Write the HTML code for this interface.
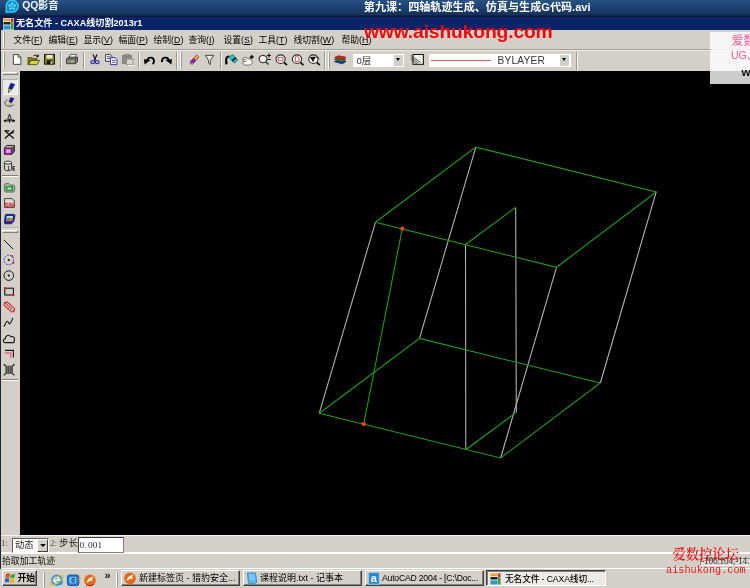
<!DOCTYPE html>
<html lang="zh">
<head>
<meta charset="utf-8">
<title>无名文件 - CAXA线切割2013r1</title>
<style>
*{box-sizing:border-box;margin:0;padding:0}
html,body{width:750px;height:588px;overflow:hidden;background:#d4d0c8}
body{position:relative;will-change:transform;font-family:"Liberation Sans","Noto Sans CJK SC",sans-serif;font-size:9px;color:#000}
.abs{position:absolute}
.t{position:absolute;white-space:nowrap;line-height:1}
#qq{left:0;top:0;width:750px;height:17px;background:linear-gradient(#27527f 0,#21497a 25%,#1a3d68 55%,#15325a 85%,#0c1c38 94%,#0a1830 100%)}
#qq .name{left:22.3px;top:1px;font-size:10.3px;color:#eef4fa;font-weight:700;letter-spacing:-0.15px}
#qq .ttl{left:363.8px;top:2px;font-size:11.1px;color:#fff;font-weight:700}
#cx{left:0;top:16.5px;width:750px;height:13.5px;background:#0a246a}
#cx .ttl{left:16px;top:2.5px;font-size:9.1px;color:#fff;font-weight:700}
#menu{left:0;top:30px;width:750px;height:19px;background:#d4d0c8}
#menu .t{top:5.8px;font-size:8.8px}
#tb{left:0;top:49px;width:750px;height:22px;background:#d4d0c8}
#canvas{left:20.4px;top:70.7px;width:729.6px;height:464.2px;background:#000;overflow:hidden}
#left{left:0;top:71px;width:20px;height:464px;background:#d4d0c8}
#inbar{left:0;top:535px;width:750px;height:19px;background:#d4d0c8;border-top:1px solid #f4f2ee}
#status{left:0;top:554px;width:750px;height:14px;background:#d4d0c8}
#task{left:0;top:567.7px;width:750px;height:20.3px;background:#d4d0c8;border-top:1.3px solid #fff}
.grip{position:absolute;width:2px;border-left:1px solid #fbfbf8;border-right:1px solid #9c9a94}
.sep{position:absolute;width:2px;border-left:1px solid #9c9a94;border-right:1px solid #f4f2ee}
.btn{position:absolute;height:16.5px;top:1px;border:1px solid;border-color:#fff #404040 #404040 #fff;box-shadow:inset -1px -1px 0 #808080;background:#d4d0c8}
.btn .t{font-size:9px;top:3px}

.combo{position:absolute;background:#fff}
.dd{position:absolute;top:1px;width:9px;height:11px;background:#d2d0ca}
.dd:after{content:"";position:absolute;left:1.7px;top:3.5px;border:2.8px solid transparent;border-top:3.2px solid #000;border-bottom:0}

.btn.on{background:#ecebe6;border-color:#404040 #fff #fff #404040;box-shadow:inset 1px 1px 0 #808080}
</style>
</head>
<body>

<!-- QQ player title -->
<div id="qq" class="abs">
  <svg class="abs" style="left:5px;top:0" width="14" height="14" viewBox="0 0 14 14">
    <path d="M1.2 12.4 L1.2 6 A6 6 0 1 1 7.2 12.2 L3.4 12.2 Z" fill="#0c8ccc" stroke="#3cd4ff" stroke-width="1.3" stroke-linejoin="round"/>
    <circle cx="7.2" cy="3.5" r="1.25" fill="#5ce0ff"/><circle cx="4.6" cy="5.4" r="1.25" fill="#5ce0ff"/>
    <circle cx="9.8" cy="5.4" r="1.25" fill="#5ce0ff"/><circle cx="5.6" cy="8.5" r="1.25" fill="#5ce0ff"/>
    <circle cx="8.8" cy="8.5" r="1.25" fill="#5ce0ff"/><circle cx="7.2" cy="6.1" r="0.8" fill="#a0f0ff"/>
  </svg>
  <span class="t name">QQ影音</span>
  <span class="t ttl">第九课：四轴轨迹生成、仿真与生成G代码.avi</span>
</div>

<!-- CAXA title bar -->
<div id="cx" class="abs">
  <svg class="abs" style="left:3px;top:1px" width="11" height="12" viewBox="0 0 11 12">
    <rect x="0" y="0" width="11" height="12" fill="#e8e4d8"/>
    <rect x="0.5" y="0.5" width="7" height="2.5" fill="#f0a030"/>
    <rect x="8" y="0.5" width="2.5" height="4" fill="#d03020"/>
    <rect x="0.5" y="4" width="7" height="2.5" fill="#202020"/>
    <rect x="0.5" y="7.5" width="7" height="4" fill="#2898c8"/>
    <rect x="8" y="5" width="2.5" height="6.5" fill="#30a050"/>
  </svg>
  <span class="t ttl">无名文件 - CAXA线切割2013r1</span>
</div>

<!-- menu -->
<div id="menu" class="abs">
  <div class="grip" style="left:3px;top:2px;height:15px"></div>
  <span class="t" style="left:13.5px">文件(<u>F</u>)</span>
  <span class="t" style="left:48.5px">编辑(<u>E</u>)</span>
  <span class="t" style="left:83.5px">显示(<u>V</u>)</span>
  <span class="t" style="left:118.5px">幅面(<u>P</u>)</span>
  <span class="t" style="left:153.5px">绘制(<u>D</u>)</span>
  <span class="t" style="left:188.5px">查询(<u>I</u>)</span>
  <span class="t" style="left:223.5px">设置(<u>S</u>)</span>
  <span class="t" style="left:258.5px">工具(<u>T</u>)</span>
  <span class="t" style="left:293.5px">线切割(<u>W</u>)</span>
  <span class="t" style="left:341.5px">帮助(<u>H</u>)</span>
</div>

<!-- toolbar -->
<div id="tb" class="abs">

  <div class="grip" style="left:3px;top:3px;height:17px"></div>
  <svg class="abs" style="left:0;top:0" width="750" height="22" viewBox="0 49 750 22" shape-rendering="auto">
    <g transform="translate(0 54.4) scale(1 0.93) translate(0 -54.5)">
    <!-- new -->
    <path d="M13.4 54.6 H18 L20.9 57.5 V65.2 H13.4 Z" fill="#fff" stroke="#303030" stroke-width="0.9"/>
    <path d="M18 54.6 V57.5 H20.9" fill="none" stroke="#303030" stroke-width="0.8"/>
    <!-- open -->
    <path d="M28 58 H32 L33 59 H37 V61 H30.5 L28 65.5 Z" fill="#8a8a18" stroke="#3a3a00" stroke-width="0.8"/>
    <path d="M28.5 65.5 L31 61 H39.5 L37 65.5 Z" fill="#d8d838" stroke="#3a3a00" stroke-width="0.8"/>
    <path d="M33.5 56 Q36 54 38 56.5 M38.3 54.5 V57 H36" fill="none" stroke="#000" stroke-width="0.9"/>
    <!-- save -->
    <rect x="44.5" y="54.5" width="10" height="10.5" fill="#7c7c14" stroke="#1c1c00" stroke-width="1"/>
    <rect x="46.5" y="55" width="6" height="4" fill="#e4e4dc"/>
    <rect x="47" y="61" width="5" height="4" fill="#101010"/>
    <rect x="50.5" y="62" width="1.5" height="2.5" fill="#e4e4dc"/>
    <!-- print -->
    <path d="M69 58 L70.5 54.5 H76.5 L75 58 Z" fill="#f0f0ec" stroke="#404040" stroke-width="0.8"/>
    <path d="M66.5 59.5 L68.5 57.5 H77.5 V62.5 L75.5 64.5 H66.5 Z" fill="#8c8c88" stroke="#303030" stroke-width="0.9"/>
    <path d="M66.5 59.5 H75.5 V64.5 M75.5 59.5 L77.5 57.5" fill="none" stroke="#303030" stroke-width="0.8"/>
    <rect x="71" y="61" width="2.5" height="1.6" fill="#c8c83c"/>
    <!-- cut -->
    <path d="M93 54.5 L95.6 61 M97 54.5 L94.4 61" stroke="#101018" stroke-width="1.2" fill="none"/>
    <circle cx="92.7" cy="62.8" r="1.8" fill="none" stroke="#2828c0" stroke-width="1.2"/>
    <circle cx="97.2" cy="62.8" r="1.8" fill="none" stroke="#2828c0" stroke-width="1.2"/>
    <!-- copy -->
    <path d="M105.5 54.5 H110 L112 56.5 V62 H105.5 Z" fill="#e8e8f0" stroke="#303040" stroke-width="0.9"/>
    <path d="M107 57 H110.5 M107 59 H110.5" stroke="#303040" stroke-width="0.8"/>
    <path d="M110.5 58 H115 L117 60 V65.5 H110.5 Z" fill="#f4f4ff" stroke="#3030b0" stroke-width="1"/>
    <path d="M112 61 H115.5 M112 63 H115.5" stroke="#3030b0" stroke-width="0.8"/>
    <!-- paste (disabled) -->
    <rect x="122.5" y="55.5" width="9" height="9" fill="#8c8c88" stroke="#7c7c78" stroke-width="0.8"/>
    <rect x="125" y="54.3" width="4" height="2.2" fill="#9c9c98" stroke="#70706c" stroke-width="0.6"/>
    <rect x="126.5" y="59.5" width="6.5" height="6" fill="#d8d6d0" stroke="#8c8c88" stroke-width="0.9"/>
    <path d="M128 66.3 H134" stroke="#f8f8f4" stroke-width="1"/>
    <!-- undo -->
    <path d="M147.2 61.2 C147.6 57 153.6 56.6 154 61.4 C154.2 63.2 153.4 64.2 152.6 65" fill="none" stroke="#000" stroke-width="1.9"/>
    <path d="M144 59.6 L150.6 60.6 L144.6 65.4 Z" fill="#000"/>
    <!-- redo -->
    <path d="M168.8 61.2 C168.4 57 162.4 56.6 162 61.4 C161.9 62 162 62.4 162.2 62.8" fill="none" stroke="#000" stroke-width="1.9"/>
    <path d="M172 59.6 L165.4 60.6 L171.4 65.4 Z" fill="#000"/>
    <!-- eraser/brush -->
    <path d="M190 62.5 L196.8 55.2 L199 57.2 L192.6 65 Q190.4 65.6 190 62.5 Z" fill="#9020a0" stroke="#401048" stroke-width="0.6"/>
    <path d="M194 58.4 L197 55.4 L198.8 57.2 L196 60.4 Z" fill="#e8c830"/>
    <path d="M195.6 56.8 L197.6 58.8" stroke="#d03020" stroke-width="0.9"/>
    <path d="M190.6 63 L192.8 64.6" stroke="#e8d0f0" stroke-width="0.8"/>
    <!-- funnel -->
    <path d="M205.3 55.5 H213.7 L210.4 61 V65.5 L208.6 64 V61 Z" fill="#eceae4" stroke="#303030" stroke-width="0.9"/>
    <!-- refresh -->
    <path d="M229.4 55.6 C225 55.4 225 59 225.2 65.4 L227.6 65 C227.2 60.6 226.8 58 229.6 57.4 Z" fill="#080808"/>
    <path d="M229.0 57.8 L232.6 54.6 L237.8 60.6 L234.2 63.8 Z" fill="#14ccd4" stroke="#003c40" stroke-width="0.6"/>
    <path d="M231.5 60.7 L235.1 57.5 L236.4 59.0 L232.8 62.2 Z" fill="#041416"/>
    <!-- pan -->
    <path d="M249.4 57.6 L251.6 55 L254 57 L251.8 59.6 Z" fill="#181818"/>
    <path d="M243 59 Q245 56.6 247.4 58.6 L250.6 60 L252.8 63.4 L250 66 H244.6 L242.4 63.6 L244 62 L242.6 60.6 Z" fill="#f8f8f4" stroke="#505050" stroke-width="0.8"/>
    <path d="M243.2 60.4 H246.4 M243.2 62.2 H246" stroke="#404040" stroke-width="0.7"/>
    <!-- zoom + -->
    <circle cx="263" cy="59.5" r="3.9" fill="#f4f4f0" stroke="#282828" stroke-width="1.1"/>
    <path d="M265.8 62.4 L268.6 65.4" stroke="#1c5c4c" stroke-width="1.8"/>
    <path d="M267 55.68 H271 M269 53.6 V57.8 M267.4 59.98 H270.6" stroke="#000" stroke-width="1.05"/>
    <!-- zoom window -->
    <circle cx="280.6" cy="59.6" r="4.6" fill="#f4f4f0" stroke="#282828" stroke-width="1.1"/>
    <rect x="278.2" y="57.6" width="4.8" height="3.8" fill="none" stroke="#c84040" stroke-width="0.8"/>
    <path d="M284 63 L287 66" stroke="#101010" stroke-width="1.8"/>
    <!-- zoom page -->
    <circle cx="297" cy="59.6" r="4.6" fill="#f4f4f0" stroke="#282828" stroke-width="1.1"/>
    <path d="M295.4 57 H297.6 L299 58.4 V62.2 H295.4 Z" fill="#fff" stroke="#c83030" stroke-width="0.8"/>
    <path d="M300.4 63 L303.4 66" stroke="#101010" stroke-width="1.8"/>
    <!-- zoom prev -->
    <circle cx="313.4" cy="59.6" r="4.6" fill="#f4f4f0" stroke="#282828" stroke-width="1.1"/>
    <path d="M310 57.4 L315.6 57 L313 62.6 Z" fill="#000"/>
    <path d="M315.4 57.4 Q318.4 56.6 319 59.6" fill="none" stroke="#282828" stroke-width="0.9"/>
    <path d="M316.8 63 L319.8 66" stroke="#101010" stroke-width="1.8"/>
    <!-- layers -->
    <path d="M334.4 62.4 L338.4 60.4 L346 62 L342.4 64.6 Z" fill="#2030c8" stroke="#0c1460" stroke-width="0.7"/>
    <path d="M334.4 60.2 L338.4 58.2 L346 59.8 L342.4 62.4 Z" fill="#20a030" stroke="#0c4814" stroke-width="0.7"/>
    <path d="M334.4 58 L338.4 56 L346 57.6 L342.4 60.2 Z" fill="#e02020" stroke="#700c0c" stroke-width="0.7"/>
    <!-- linetype icon -->
    <rect x="413" y="54.6" width="10.4" height="10.6" fill="#f0eee8" stroke="#181818" stroke-width="1.1"/>
    <path d="M410.8 55.6 L420.4 63 M410.8 57.8 L418.6 63.8 M410.8 60 L417 64.8" stroke="#282828" stroke-width="0.8"/>
    </g>
  </svg>
  <div class="sep" style="left:60px;top:3px;height:17px"></div>
  <div class="sep" style="left:83px;top:3px;height:17px"></div>
  <div class="sep" style="left:138px;top:3px;height:17px"></div>
  <div class="sep" style="left:176px;top:1px;height:20px"></div>
  <div class="grip" style="left:180px;top:3px;height:17px"></div>
  <div class="sep" style="left:220px;top:3px;height:17px"></div>
  <div class="sep" style="left:324px;top:1px;height:20px"></div>
  <div class="grip" style="left:328px;top:3px;height:17px"></div>
  <div class="combo" style="left:353px;top:4.5px;width:51px;height:13px">
    <span class="t" style="left:3.5px;top:2.5px;font-size:9.5px;color:#303030">0层</span>
    <div class="dd" style="right:1px"></div>
  </div>
  <div class="combo" style="left:429px;top:4.5px;width:142px;height:13px">
    <div class="abs" style="left:1.5px;top:6px;width:60px;height:1px;background:#dc6464"></div>
    <span class="t" style="left:68.5px;top:2.3px;font-size:10.2px;letter-spacing:0.2px;color:#343434">BYLAYER</span>
    <div class="dd" style="right:2px"></div>
  </div>
  <div class="sep" style="left:576px;top:1px;height:20px"></div>
</div>

<div class="abs" style="left:1px;top:48.5px;width:749px;height:1px;background:#a4a098"></div>
<div class="abs" style="left:1px;top:49.5px;width:749px;height:1px;background:#eeece8"></div>
<!-- left toolbar -->
<div id="left" class="abs">
  <div class="abs" style="left:2px;top:1px;width:16px;height:3px;border-top:1px solid #fff;border-left:1px solid #fff;border-bottom:1px solid #808080;border-right:1px solid #808080"></div>
  <div class="abs" style="left:2.4px;top:8.3px;width:15.4px;height:15.4px;background:#eceae6;border:1px solid;border-color:#aeaca6 #f8f8f6 #f8f8f6 #b8b6b0"></div>
  <div class="abs" style="left:2px;top:104px;width:16px;height:2px;border-top:1px solid #808080;border-bottom:1px solid #fff"></div>
  <div class="abs" style="left:2px;top:156px;width:16px;height:2px;border-top:1px solid #b4b2ac;border-bottom:1px solid #e4e2de"></div>
  <div class="abs" style="left:2px;top:159px;width:16px;height:3px;border-top:1px solid #fff;border-left:1px solid #fff;border-bottom:1px solid #808080;border-right:1px solid #808080"></div>
  <div class="abs" style="left:2px;top:308px;width:16px;height:2px;border-top:1px solid #808080;border-bottom:1px solid #fff"></div>
  <svg class="abs" style="left:0;top:0" width="20" height="464" viewBox="0 71 20 464">
    <!-- pencil 1 -->
    <path d="M10.8 83.2 L14.8 84.4 L11.8 89.6 L8.6 88.4 Z" fill="#1418b8" stroke="#080c60" stroke-width="0.5"/>
    <path d="M8.6 88.4 L11.8 89.6 L8.5 92.6 Z" fill="#d0d428" stroke="#303010" stroke-width="0.5"/><path d="M8.55 91 L9.6 91.5 L8.5 92.6 Z" fill="#181808"/>
    <!-- pencil 2 with arc -->
    <path d="M10.6 97.6 L14 98.6 L11.6 102.8 L9 102 Z" fill="#1020a8" stroke="#080c50" stroke-width="0.5"/>
    <path d="M9 102 L11.6 102.8 L9 105" fill="#e8d838" stroke="#404010" stroke-width="0.4"/>
    <path d="M7.4 100 C3.4 101.4 4.4 106.4 9.4 106.2 C11.6 106.2 13.4 105.4 14 104.4" fill="none" stroke="#303030" stroke-width="0.9"/>
    <!-- dimension -->
    <path d="M9.5 114 L7.6 119.4 H11.4 Z" fill="none" stroke="#101010" stroke-width="0.9"/>
    <path d="M4 120.8 H15" stroke="#101010" stroke-width="1"/>
    <path d="M3.4 120.8 L6.2 119 V122.6 Z M15.4 120.8 L12.6 119 V122.6 Z" fill="#101010"/>
    <path d="M9.5 119.4 V123" stroke="#101010" stroke-width="0.8"/>
    <!-- trim -->
    <path d="M4.4 130.8 H9.6" stroke="#101010" stroke-width="1.3"/>
    <path d="M4.8 138.6 L14 130.2 M5.2 131 L13.8 138.6" stroke="#101010" stroke-width="1.3"/>
    <path d="M10.4 133.6 L14.2 132.6" stroke="#101010" stroke-width="0.9"/>
    <!-- magenta box -->
    <path d="M4.4 148 L6.8 145.4 H14.4 V151.6 L12 154.2 H4.4 Z" fill="#585858" stroke="#202020" stroke-width="0.9"/>
    <path d="M5.4 147.6 L7.2 146 H13.6 L12 147.6 Z" fill="#b8b4ac"/>
    <rect x="4.8" y="148.2" width="7" height="5.8" fill="#dc38dc" stroke="#401040" stroke-width="0.7"/>
    <rect x="6.6" y="149.6" width="3.6" height="3" fill="#ffd0ff"/>
    <path d="M8.4 149.4 V153" stroke="#e060e0" stroke-width="0.8"/>
    <!-- cylinder -->
    <ellipse cx="8" cy="162.6" rx="3.6" ry="1.5" fill="#f0eee8" stroke="#202020" stroke-width="0.9"/>
    <path d="M4.4 162.6 V169 C4.4 171.2 11.6 171.2 11.6 169 V162.6" fill="none" stroke="#202020" stroke-width="0.9"/>
    <path d="M8.6 166 V170" stroke="#202020" stroke-width="0.8"/>
    <path d="M13 166.4 V170.4 M13 166.6 H15 M13 168.4 H14.6 M13 170.2 H15" stroke="#101010" stroke-width="0.9"/>
    <!-- green folder -->
    <path d="M4.4 185.4 Q4.4 183.6 6 183.6 H9 L10.4 185 H13 Q14.6 185 14.6 186.6 V190.4 Q14.6 192 13 192 H6 Q4.4 192 4.4 190.4 Z" fill="#a4b8a4" stroke="#586858" stroke-width="0.9"/>
    <rect x="6" y="186.4" width="6.8" height="4.2" fill="#38b048" stroke="#287028" stroke-width="0.5"/>
    <rect x="7.6" y="187.6" width="3.4" height="1.8" fill="#c8f0c8"/>
    <!-- red sav doc -->
    <path d="M4.6 198.6 H12.2 L14.4 200.8 V207.4 H4.6 Z" fill="#c4c0b8" stroke="#383838" stroke-width="0.9"/>
    <path d="M5.2 200 H11.8 M5.2 201.4 H13" stroke="#f0f0ec" stroke-width="0.8"/>
    <text x="4.6" y="207" font-family="Liberation Sans,sans-serif" font-size="5.6" font-weight="700" fill="#ff1010" letter-spacing="-0.3">SAV</text>
    <!-- blue picture -->
    <path d="M6.2 214.4 H13.6 Q15 214.4 14.8 215.8 L13.8 221.4 L11.4 223.8 H5.6 Q4.2 223.8 4.4 222.4 L5.2 215.6 Q5.4 214.4 6.2 214.4 Z" fill="#1c24b8" stroke="#0c1070" stroke-width="0.8"/>
    <path d="M6.8 216 H13 L12.4 220.6 H6.2 Z" fill="#c8e4f8"/>
    <path d="M6.5 218.6 L9 217.6 L10.6 218.6 L12.7 217.8 L12.4 220.6 H6.2 Z" fill="#38a048"/>
    <path d="M6.3 220 L9 219.2 L12.5 219.6 L12.4 221.2 H6.1 Z" fill="#e06820"/>
    <!-- line -->
    <path d="M4 240 L13.2 249.2" stroke="#181818" stroke-width="1"/>
    <!-- dotted circle -->
    <circle cx="8.8" cy="260" r="4.8" fill="none" stroke="#2828d8" stroke-width="1" stroke-dasharray="1.6 1.3"/>
    <circle cx="8.8" cy="260" r="1.1" fill="#101010"/>
    <rect x="11.4" y="255.2" width="1.8" height="1.8" fill="#e02020"/>
    <rect x="12.4" y="262" width="1.8" height="1.8" fill="#e02020"/>
    <!-- circle dot -->
    <circle cx="8.8" cy="275.6" r="4.8" fill="none" stroke="#181818" stroke-width="1"/>
    <circle cx="8.8" cy="275.6" r="1.1" fill="#101010"/>
    <!-- rect -->
    <rect x="4.8" y="288.2" width="8.6" height="6.8" fill="none" stroke="#181818" stroke-width="1.1"/>
    <rect x="4" y="287.2" width="2" height="2" fill="#e02020"/>
    <rect x="12.4" y="294" width="2" height="2" fill="#e02020"/>
    <!-- red hatched slot -->
    <g transform="rotate(42 9.4 307)">
      <rect x="3.4" y="304.6" width="12" height="4.8" rx="2.4" fill="none" stroke="#e02828" stroke-width="1.1"/>
      <path d="M6 304.8 L7.6 309.2 M8.4 304.8 L10 309.2 M10.8 304.8 L12.4 309.2" stroke="#e85050" stroke-width="0.7"/>
      <path d="M2.6 307 H16.2" stroke="#402020" stroke-width="0.5"/>
    </g>
    <!-- spline -->
    <path d="M3.8 326.6 C5 325.6 6 320.6 7.6 321.4 C9.2 322.2 8.6 324.6 10 323.6 C11.2 322.6 12 319.8 13 318" fill="none" stroke="#181818" stroke-width="1.1"/>
    <!-- cloud -->
    <path d="M5.4 342.6 C2.6 342.6 2.8 338.8 5.4 338.6 C5.4 335.4 9 334 10.8 336.6 C13.6 336 15.6 338.6 14 340.6 C15 342.2 13.6 342.8 12.6 342.6 Z" fill="none" stroke="#181818" stroke-width="1.1"/>
    <!-- corner -->
    <path d="M5 350.4 H13.4 V357.4" fill="none" stroke="#181818" stroke-width="1.1"/>
    <path d="M5 352.8 H10.8 V357.4" fill="none" stroke="#f05868" stroke-width="1.2"/>
    <!-- hatch -->
    <rect x="5.2" y="365.6" width="7.8" height="8.4" fill="#8c8c88"/>
    <path d="M5.2 367 H13 M5.2 369 H13 M5.2 371 H13 M5.2 373 H13 M6.6 365.6 V374 M8.6 365.6 V374 M10.6 365.6 V374 M12.4 365.6 V374" stroke="#303030" stroke-width="0.55"/>
    <path d="M3.8 364.2 L5.6 366 M14.4 364.2 L12.6 366 M3.8 375.4 L5.6 373.6 M14.4 375.4 L12.6 373.6" stroke="#101010" stroke-width="1.1"/>
  </svg>
</div>

<!-- drawing canvas -->
<div id="canvas" class="abs">
  <svg class="abs" style="left:-0.4px;top:0.3px" width="730" height="464" viewBox="20 71 730 464" fill="none" stroke-width="1">
    <g stroke="#b0b0b0" stroke-width="1.1">
      <line x1="375.4" y1="222.3" x2="319.3" y2="413.2"/>
      <line x1="475.8" y1="147.1" x2="419.5" y2="338.4"/>
      <line x1="656.2" y1="191.9" x2="600.3" y2="383"/>
      <line x1="556.5" y1="267.3" x2="500.6" y2="458"/>
      <line x1="465.5" y1="244.5" x2="465.8" y2="449.7"/>
      <line x1="515.7" y1="207.4" x2="516.3" y2="412.4"/>
    </g>
    <g stroke="#1c9e1c" stroke-width="1.1">
      <polygon points="375.4,222.3 475.8,147.1 656.2,191.9 556.5,267.3"/>
      <polygon points="319.3,413.2 419.5,338.4 600.3,383 500.6,458"/>
      <line x1="465.5" y1="244.5" x2="515.7" y2="207.4"/>
      <line x1="465.8" y1="449.7" x2="516.3" y2="412.4"/>
      <line x1="402.3" y1="228.7" x2="363.7" y2="424"/>
    </g>
    <circle cx="402.3" cy="228.7" r="2.1" fill="#ff4010" stroke="none"/>
    <circle cx="363.7" cy="424" r="2.1" fill="#ff4010" stroke="none"/>
  </svg>
</div>

<!-- input bar -->
<div id="inbar" class="abs">
  <div class="abs" style="left:0;top:16.2px;width:750px;height:1.5px;background:#fff"></div>
  <span class="t" style="left:1px;top:3px;font-size:9px;color:#505050;font-family:'Liberation Serif','Noto Serif CJK SC',serif">1:</span>
  <div class="abs" style="left:12px;top:2px;width:37px;height:15px;background:#fff;border:1px solid;border-color:#606060 #fff #fff #606060">
    <span class="t" style="left:2px;top:2px;font-size:9.3px;color:#282828">动态</span>
    <div class="abs" style="right:0;top:0;width:11px;height:13px;background:#d4d0c8;border:1px solid;border-color:#fff #404040 #404040 #fff"></div>
    <div class="abs" style="right:2.5px;top:5px;border:3px solid transparent;border-top:3.5px solid #000;border-bottom:0"></div>
  </div>
  <span class="t" style="left:50px;top:3px;font-size:9px;color:#505050;font-family:'Liberation Serif','Noto Serif CJK SC',serif">2:</span>
  <span class="t" style="left:59px;top:2px;font-size:9.5px;color:#202020">步长</span>
  <div class="abs" style="left:77.5px;top:1.3px;width:46px;height:15.5px;background:#fff;border:1px solid;border-color:#404040 #808080 #808080 #404040">
    <span class="t" style="left:1px;top:3px;font-size:9.2px;color:#262626;font-family:'Liberation Serif',serif;letter-spacing:0.1px">0<span style="letter-spacing:1.6px">.</span>001</span>
  </div>
</div>

<!-- status -->
<div id="status" class="abs">
  <span class="t" style="left:2px;top:2.5px;font-size:8.9px;color:#101010">拾取加工轨迹</span>
  <div class="abs" style="left:700px;top:3.5px;width:50px;height:8.5px;background:#dedcd6;border-top:1px solid #909090;border-left:1px solid #909090;border-bottom:1px solid #f4f4f0"></div>
  <span id="coord" class="t" style="left:701px;top:3px;font-size:9.4px;color:#303030;font-family:'Liberation Serif',serif;letter-spacing:-0.2px">-106.104,-14.</span>
</div>

<!-- taskbar -->
<div id="task" class="abs">
  <div class="btn" style="left:2px;width:35px">
    <svg class="abs" style="left:2px;top:1px" width="11" height="12" viewBox="0 0 11 12">
      <path d="M1 2.2 Q3 0.6 5 1.8 L4.4 5.6 Q2.6 4.6 0.4 6 Z" fill="#e04818"/>
      <path d="M5.8 2 Q8 3 10.2 1.6 L9.6 5.6 Q7.4 7 5.2 5.8 Z" fill="#48a828"/>
      <path d="M0.3 6.8 Q2.4 5.4 4.3 6.4 L3.7 10.4 Q1.8 9.4 -0.3 10.8 Z" fill="#2860d8"/>
      <path d="M5 6.6 Q7.2 7.8 9.4 6.4 L8.8 10.4 Q6.6 11.8 4.4 10.6 Z" fill="#e8b818"/>
    </svg>
    <span class="t" style="left:14.5px;font-weight:700;font-size:8.9px;top:3.5px">开始</span>
  </div>
  <div class="grip" style="left:42.7px;top:3.5px;height:14.5px"></div>
  <svg class="abs" style="left:48px;top:3px" width="66" height="16" viewBox="48 571 66 16">
    <!-- IE -->
    <circle cx="56.8" cy="579.2" r="5.7" fill="#2c98e4"/>
    <circle cx="56.4" cy="578.4" r="3.6" fill="#58b8f4" opacity="0.7"/>
    <path d="M53 579.3 H60.6" stroke="#eef8ff" stroke-width="1.6"/>
    <circle cx="56.8" cy="579.3" r="2.7" fill="none" stroke="#eef8ff" stroke-width="1.5"/>
    <path d="M57.4 580.2 H62.6 V583.4 H58.6 Z" fill="#2c98e4"/>
    <ellipse cx="56.8" cy="579.2" rx="7.4" ry="2.6" transform="rotate(-36 56.8 579.2)" fill="none" stroke="#e8b428" stroke-width="1.1"/>
    <!-- blue icon -->
    <rect x="67.4" y="574" width="11.4" height="10.6" rx="2" fill="#1c78d0" stroke="#0c4890" stroke-width="0.8"/>
    <rect x="69.4" y="576" width="7" height="6.6" rx="1" fill="#78c0f8"/>
    <path d="M75 577.6 H72 V581 H75 M73 579.2 H75" stroke="#0c4890" stroke-width="1" fill="none"/>
    <rect x="78.6" y="576.4" width="1.8" height="3" fill="#e8a020"/>
    <!-- orange -->
    <circle cx="90" cy="579.4" r="5.8" fill="#e86818"/>
    <path d="M86.4 581.6 Q88 576.6 93.6 575.6 Q91.6 577.6 92.8 580 Q90.6 578.8 89 580.4 Q88 581.6 86.4 581.6 Z" fill="#fff4e0"/>
    <path d="M86 584 Q90 586 94 583.4" stroke="#a83808" stroke-width="1" fill="none"/>
  </svg>
  <span class="t" style="left:104.5px;top:1px;font-size:11px;font-weight:700;color:#101010">»</span>
  <div class="grip" style="left:116.3px;top:3.5px;height:14.5px"></div>

  <div class="btn" style="left:121px;width:119px">
    <svg class="abs" style="left:2px;top:1px" width="12" height="13" viewBox="0 0 12 13">
      <circle cx="6" cy="6.4" r="5.8" fill="#e86818"/>
      <path d="M2.4 8.6 Q4 3.6 9.6 2.6 Q7.6 4.6 8.8 7 Q6.6 5.8 5 7.4 Q4 8.6 2.4 8.6 Z" fill="#fff4e0"/>
    </svg>
    <span class="t" style="left:17px">新建标签页 - 猎豹安全...</span>
  </div>
  <div class="btn" style="left:243px;width:119px">
    <svg class="abs" style="left:2px;top:1px" width="12" height="13" viewBox="0 0 12 13">
      <path d="M1.4 1 H9.4 L10.8 10.6 Q7 12.6 2.6 11.4 Z" fill="#58b8f0" stroke="#2880c8" stroke-width="0.8"/>
      <path d="M3 3 H8.6 M3.2 5 H8.8 M3.4 7 H9" stroke="#a8dcff" stroke-width="0.8"/>
    </svg>
    <span class="t" style="left:16px">课程说明.txt - 记事本</span>
  </div>
  <div class="btn" style="left:365px;width:119px">
    <svg class="abs" style="left:2px;top:1px" width="12" height="13" viewBox="0 0 12 13">
      <rect x="0.6" y="0.6" width="10.6" height="11.6" fill="#2888d0" stroke="#a0d0f0" stroke-width="0.8"/>
      <text x="5.9" y="10.4" text-anchor="middle" font-family="Liberation Sans,sans-serif" font-size="11" font-weight="700" fill="#fff">a</text>
    </svg>
    <span id="acad" class="t" style="left:16px;font-size:8.7px;letter-spacing:-0.24px;top:3.3px">AutoCAD 2004 - [C:\Doc...</span>
  </div>
  <div class="btn on" style="left:486px;width:120px">
    <svg class="abs" style="left:3px;top:2px" width="11" height="12" viewBox="0 0 11 12">
      <rect x="0" y="0" width="11" height="12" fill="#e8e4d8"/>
      <rect x="0.5" y="0.5" width="7" height="2.5" fill="#f0a030"/>
      <rect x="8" y="0.5" width="2.5" height="4" fill="#d03020"/>
      <rect x="0.5" y="4" width="7" height="2.5" fill="#202020"/>
      <rect x="0.5" y="7.5" width="7" height="4" fill="#2898c8"/>
      <rect x="8" y="5" width="2.5" height="6.5" fill="#30a050"/>
    </svg>
    <span class="t" style="left:18px;top:4px;font-size:8.7px;letter-spacing:-0.12px;font-weight:500">无名文件 - CAXA线切...</span>
  </div>
</div>

<div class="abs" style="left:0;top:17px;width:1px;height:552px;background:#1c2440"></div>
<!-- watermarks -->
<span class="t" style="left:364.3px;top:23.6px;font-size:17.6px;font-weight:700;color:#f00808;letter-spacing:-0.14px;transform:scaleX(1.097);transform-origin:0 0">www.aishukong.com</span>
<div class="abs" style="left:710px;top:32px;width:40px;height:52px;background:rgba(255,255,255,0.8)"></div>
<span class="t" style="left:731.5px;top:35px;font-size:12px;color:#ee5c98">爱数</span>
<span class="t" style="left:731px;top:50px;font-size:10.5px;color:#ee5c98">UG、</span>
<span class="t" style="left:741.5px;top:67px;font-size:11.5px;font-weight:700;color:#101010">ww</span>
<span class="t" style="left:672.4px;top:547.5px;font-size:13.3px;font-weight:600;color:#e81818;font-family:'Liberation Serif','Noto Serif CJK SC',serif">爱数控论坛</span>
<span class="t" style="left:665.5px;top:565.2px;font-size:11.8px;color:#e81818;font-family:'Liberation Mono',monospace;transform:scaleX(0.866);transform-origin:0 0">aishukong.com</span>

</body>
</html>
